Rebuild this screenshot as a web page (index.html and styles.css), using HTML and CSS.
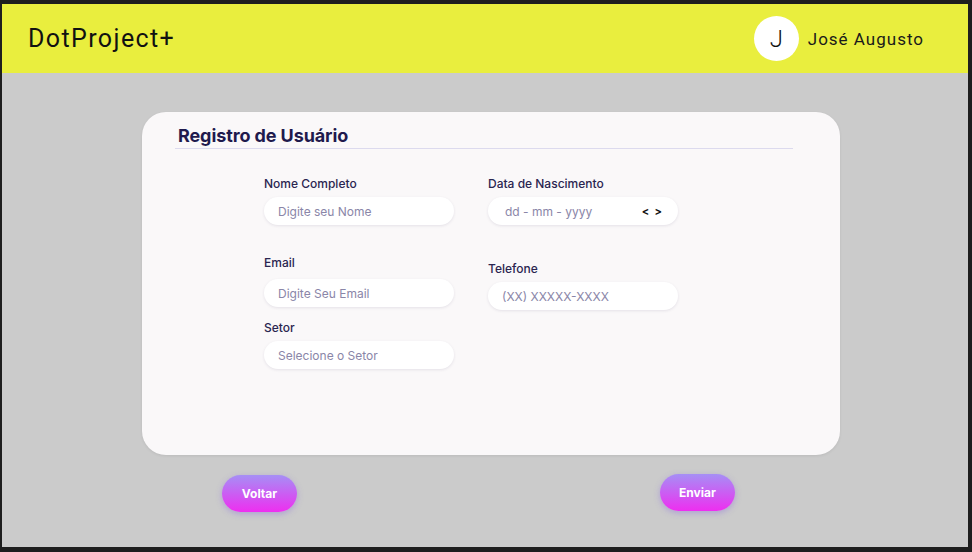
FILE: index.html
```html
<!DOCTYPE html>
<html lang="pt-BR">
<head>
<meta charset="utf-8">
<title>DotProject+</title>
<link rel="stylesheet" href="styles.css">
</head>
<body>
<div class="frame">
  <header class="topbar">
    <div class="brand">DotProject+</div>
    <div class="user">
      <div class="avatar">J</div>
      <span class="user-name">José Augusto</span>
    </div>
  </header>
  <main class="content">
    <section class="card">
      <h1 class="card-title">Registro de Usuário</h1>
      <div class="form">
        <div class="col">
          <div class="field f-nome">
            <label class="label">Nome Completo</label>
            <div class="input"><span class="ph">Digite seu Nome</span></div>
          </div>
          <div class="field f-email">
            <label class="label">Email</label>
            <div class="input"><span class="ph">Digite Seu Email</span></div>
          </div>
          <div class="field f-setor">
            <label class="label">Setor</label>
            <div class="input"><span class="ph">Selecione o Setor</span></div>
          </div>
        </div>
        <div class="col">
          <div class="field f-data">
            <label class="label">Data de Nascimento</label>
            <div class="input input-date"><span class="ph">dd - mm - yyyy</span><span class="arrows">&lt;&nbsp;&nbsp;&gt;</span></div>
          </div>
          <div class="field f-tel">
            <label class="label">Telefone</label>
            <div class="input"><span class="ph">(XX) XXXXX-XXXX</span></div>
          </div>
        </div>
      </div>
    </section>
    <div class="actions">
      <button class="btn">Voltar</button>
      <button class="btn btn-send">Enviar</button>
    </div>
  </main>
</div>
</body>
</html>
```
FILE: styles.css
```css
* { box-sizing: border-box; }
html, body { margin: 0; padding: 0; }
body {
  background: #1e1e1e;
  width: 972px;
  height: 552px;
  overflow: hidden;
  font-family: "Inter", "DejaVu Sans", sans-serif;
}
.frame {
  margin: 4px 0 0 2px;
  width: 966px;
  height: 543px;
  background: #cbcbcb;
  display: flex;
  flex-direction: column;
}
.topbar {
  height: 69px;
  background: #e9ee3e;
  display: flex;
  align-items: center;
  justify-content: space-between;
  padding: 0 44px 0 26px;
}
.brand {
  font-family: "Roboto", "Inter", sans-serif;
  font-size: 25px;
  letter-spacing: 1.4px;
  color: #111;
  font-weight: 400;
}
.user { display: flex; align-items: center; gap: 9px; }
.avatar {
  width: 45px; height: 45px; border-radius: 50%;
  background: #fff;
  display: flex; align-items: center; justify-content: center;
  font-family: "Roboto", sans-serif;
  font-size: 24px; color: #111; font-weight: 300;
}
.user-name {
  font-family: "Roboto", sans-serif;
  font-size: 17px; color: #1a1a1a; letter-spacing: 1px;
}
.content {
  padding: 39px 0 0 140px;
}
.card {
  width: 698px;
  height: 343px;
  background: #faf8f9;
  border-radius: 24px;
  padding: 12px 47px 0 33px;
  box-shadow: 0 1px 3px rgba(0,0,0,0.08);
}
.card-title {
  margin: 0;
  padding: 0 0 0 3px;
  font-size: 18px;
  font-weight: 700;
  color: #1f1a4d;
  line-height: 24px;
  border-bottom: 1px solid #dcdaee;
  letter-spacing: -0.1px;
}
.form {
  display: flex;
  gap: 34px;
  padding-left: 89px;
  padding-top: 27px;
}
.col { display: flex; flex-direction: column; width: 190px; }
.label {
  display: block;
  font-size: 12px;
  line-height: 16px;
  font-weight: 500;
  color: #2a2550;
}
.input {
  height: 28px;
  background: #fff;
  border-radius: 14px;
  box-shadow: 0 1px 3px rgba(40,30,80,0.10);
  display: flex;
  align-items: center;
  padding: 0 14px;
  font-size: 12px;
}
.ph { color: #8a86a8; }
.input-date { padding-left: 17px; justify-content: space-between; padding-right: 16px; }
.arrows { color: #111; font-weight: 700; font-size: 11px; }
.f-nome .label, .f-data .label { margin-bottom: 5px; }
.f-email { margin-top: 30px; }
.f-email .label { margin-bottom: 8px; }
.f-setor { margin-top: 13px; }
.f-setor .label { margin-bottom: 5px; }
.f-tel { margin-top: 36px; }
.f-tel .label { margin-bottom: 5px; }
.actions {
  display: flex;
  padding-left: 80px;
  gap: 363px;
  margin-top: 20px;
}
.btn {
  width: 75px;
  height: 37px;
  border: none;
  border-radius: 19px;
  background: linear-gradient(180deg, #a68ff5 0%, #ee2ef0 100%);
  color: #fff;
  font-family: "Inter", sans-serif;
  font-weight: 700;
  font-size: 12px;
  box-shadow: 0 2px 6px rgba(120,80,230,0.35);
  padding: 0;
}
.btn-send { margin-top: -1px; }
```
